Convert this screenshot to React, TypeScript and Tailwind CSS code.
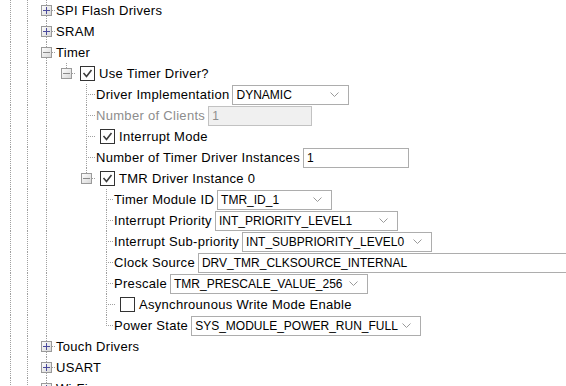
import React from "react";

type Field =
  | { type: "select"; value: string; width: number }
  | { type: "input"; value: string; width: number; disabled?: boolean };

interface TreeNode {
  label: string;
  check?: boolean;
  checked?: boolean;
  expander?: "plus" | "minus";
  disabled?: boolean;
  field?: Field;
  children?: TreeNode[];
}

const tree: TreeNode[] = [
  { label: "SPI Flash Drivers", expander: "plus" },
  { label: "SRAM", expander: "plus" },
  {
    label: "Timer",
    expander: "minus",
    children: [
      {
        label: "Use Timer Driver?",
        expander: "minus",
        check: true,
        checked: true,
        children: [
          { label: "Driver Implementation", field: { type: "select", value: "DYNAMIC", width: 117 } },
          { label: "Number of Clients", disabled: true, field: { type: "input", value: "1", width: 104, disabled: true } },
          { label: "Interrupt Mode", check: true, checked: true },
          { label: "Number of Timer Driver Instances", field: { type: "input", value: "1", width: 106 } },
          {
            label: "TMR Driver Instance 0",
            expander: "minus",
            check: true,
            checked: true,
            children: [
              { label: "Timer Module ID", field: { type: "select", value: "TMR_ID_1", width: 115 } },
              { label: "Interrupt Priority", field: { type: "select", value: "INT_PRIORITY_LEVEL1", width: 183 } },
              { label: "Interrupt Sub-priority", field: { type: "select", value: "INT_SUBPRIORITY_LEVEL0", width: 190 } },
              { label: "Clock Source", field: { type: "input", value: "DRV_TMR_CLKSOURCE_INTERNAL", width: 372 } },
              { label: "Prescale", field: { type: "select", value: "TMR_PRESCALE_VALUE_256", width: 198 } },
              { label: "Asynchrounous Write Mode Enable", check: true, checked: false },
              { label: "Power State", field: { type: "select", value: "SYS_MODULE_POWER_RUN_FULL", width: 230 } },
            ],
          },
        ],
      },
    ],
  },
  { label: "Touch Drivers", expander: "plus" },
  { label: "USART", expander: "plus" },
  { label: "Wi-Fi", expander: "plus" },
];

interface Row {
  node: TreeNode;
  guides: boolean[]; // ancestor columns that keep a vertical line
  last: boolean;
  level: number;
}

const flatten = (nodes: TreeNode[], guides: boolean[], level: number, rows: Row[]) => {
  nodes.forEach((node, i) => {
    // top level runs on past the visible area
    const last = level === 0 ? false : i === nodes.length - 1;
    rows.push({ node, guides, last, level });
    if (node.children) flatten(node.children, [...guides, !last], level + 1, rows);
  });
  return rows;
};

const DOT = "#a0a0a0";

const Pipe = ({ width = 20, x = 10 }: { width?: number; x?: number }) => (
  <svg width={width} height={21} className="shrink-0">
    <line x1={x + 0.5} y1={0} x2={x + 0.5} y2={21} stroke={DOT} strokeDasharray="1 1" />
  </svg>
);

const Blank = () => <div className="h-[21px] w-5 shrink-0" />;

const Connector = ({ last, expander, short }: { last: boolean; expander?: "plus" | "minus"; short?: boolean }) => (
  <svg width={short ? 18 : 20} height={21} className="shrink-0">
    <line x1={10.5} y1={0} x2={10.5} y2={last ? 11 : 21} stroke={DOT} strokeDasharray="1 1" />
    <line x1={10} y1={10.5} x2={20} y2={10.5} stroke={DOT} strokeDasharray="1 1" />
    {expander && (
      <>
        <defs>
          <linearGradient id="exp" x1="0" y1="0" x2="1" y2="1">
            <stop offset="0" stopColor="#ffffff" />
            <stop offset="1" stopColor="#d6d6d6" />
          </linearGradient>
        </defs>
        <rect x={5.5} y={5.5} width={10} height={10} fill="url(#exp)" stroke="#9a9a9a" />
        <line x1={7} y1={10.5} x2={14} y2={10.5} stroke={expander === "plus" ? "#4b4b9c" : "#8a8a8a"} />
        {expander === "plus" && <line x1={10.5} y1={7} x2={10.5} y2={14} stroke="#4b4b9c" />}
      </>
    )}
  </svg>
);

const CheckBox = ({ checked }: { checked?: boolean }) => (
  <svg width={15} height={15} className="ml-1 shrink-0">
    <rect x={0.5} y={0.5} width={14} height={14} fill="#fff" stroke="#333333" />
    {checked && (
      <polyline points="3.5,7 6.5,10.5 11.5,4" fill="none" stroke="#3c3c3c" strokeWidth={1.6} />
    )}
  </svg>
);

const Chevron = () => (
  <svg width={9} height={6} className="shrink-0">
    <polyline points="0.5,0.5 4.5,4.5 8.5,0.5" fill="none" stroke="#9a9a9a" />
  </svg>
);

const FieldBox = ({ field }: { field: Field }) => {
  const disabled = field.type === "input" && field.disabled;
  return (
    <div
      style={{ width: field.width }}
      className={`ml-[3px] flex h-[20px] shrink-0 items-center border pl-[3px] pr-[9px] text-[12px] tracking-normal ${
        disabled ? "border-[#c2c2c2] bg-[#f0f0f0] text-[#8d8d8d]" : "border-[#adadad] bg-white"
      }`}
    >
      <span className="flex-1 whitespace-nowrap">{field.value}</span>
      {field.type === "select" && <Chevron />}
    </div>
  );
};

const TreeRow = ({ row }: { row: Row }) => {
  const { node } = row;
  return (
    <div className="flex h-[21px] items-center whitespace-nowrap">
      <Pipe width={20} x={10} />
      <Pipe width={16} x={7} />
      {row.guides.map((g, i) => (g ? <Pipe key={i} /> : <Blank key={i} />))}
      <Connector last={row.last} expander={node.expander} short={row.level === 3 && !node.check} />
      {node.check && <CheckBox checked={node.checked} />}
      <span className={`${node.check ? "ml-1" : ""} ${node.disabled ? "text-[#8d8d8d]" : "text-black"}`}>
        {node.label}
      </span>
      {node.field && <FieldBox field={node.field} />}
    </div>
  );
};

export default function App() {
  const rows = flatten(tree, [], 0, []);
  return (
    <div className="h-[386px] w-[566px] overflow-hidden bg-white font-['Liberation_Sans',Arial,sans-serif] text-[13px] leading-none tracking-[0.3px] text-black">
      {rows.map((row, i) => (
        <TreeRow key={i} row={row} />
      ))}
    </div>
  );
}
